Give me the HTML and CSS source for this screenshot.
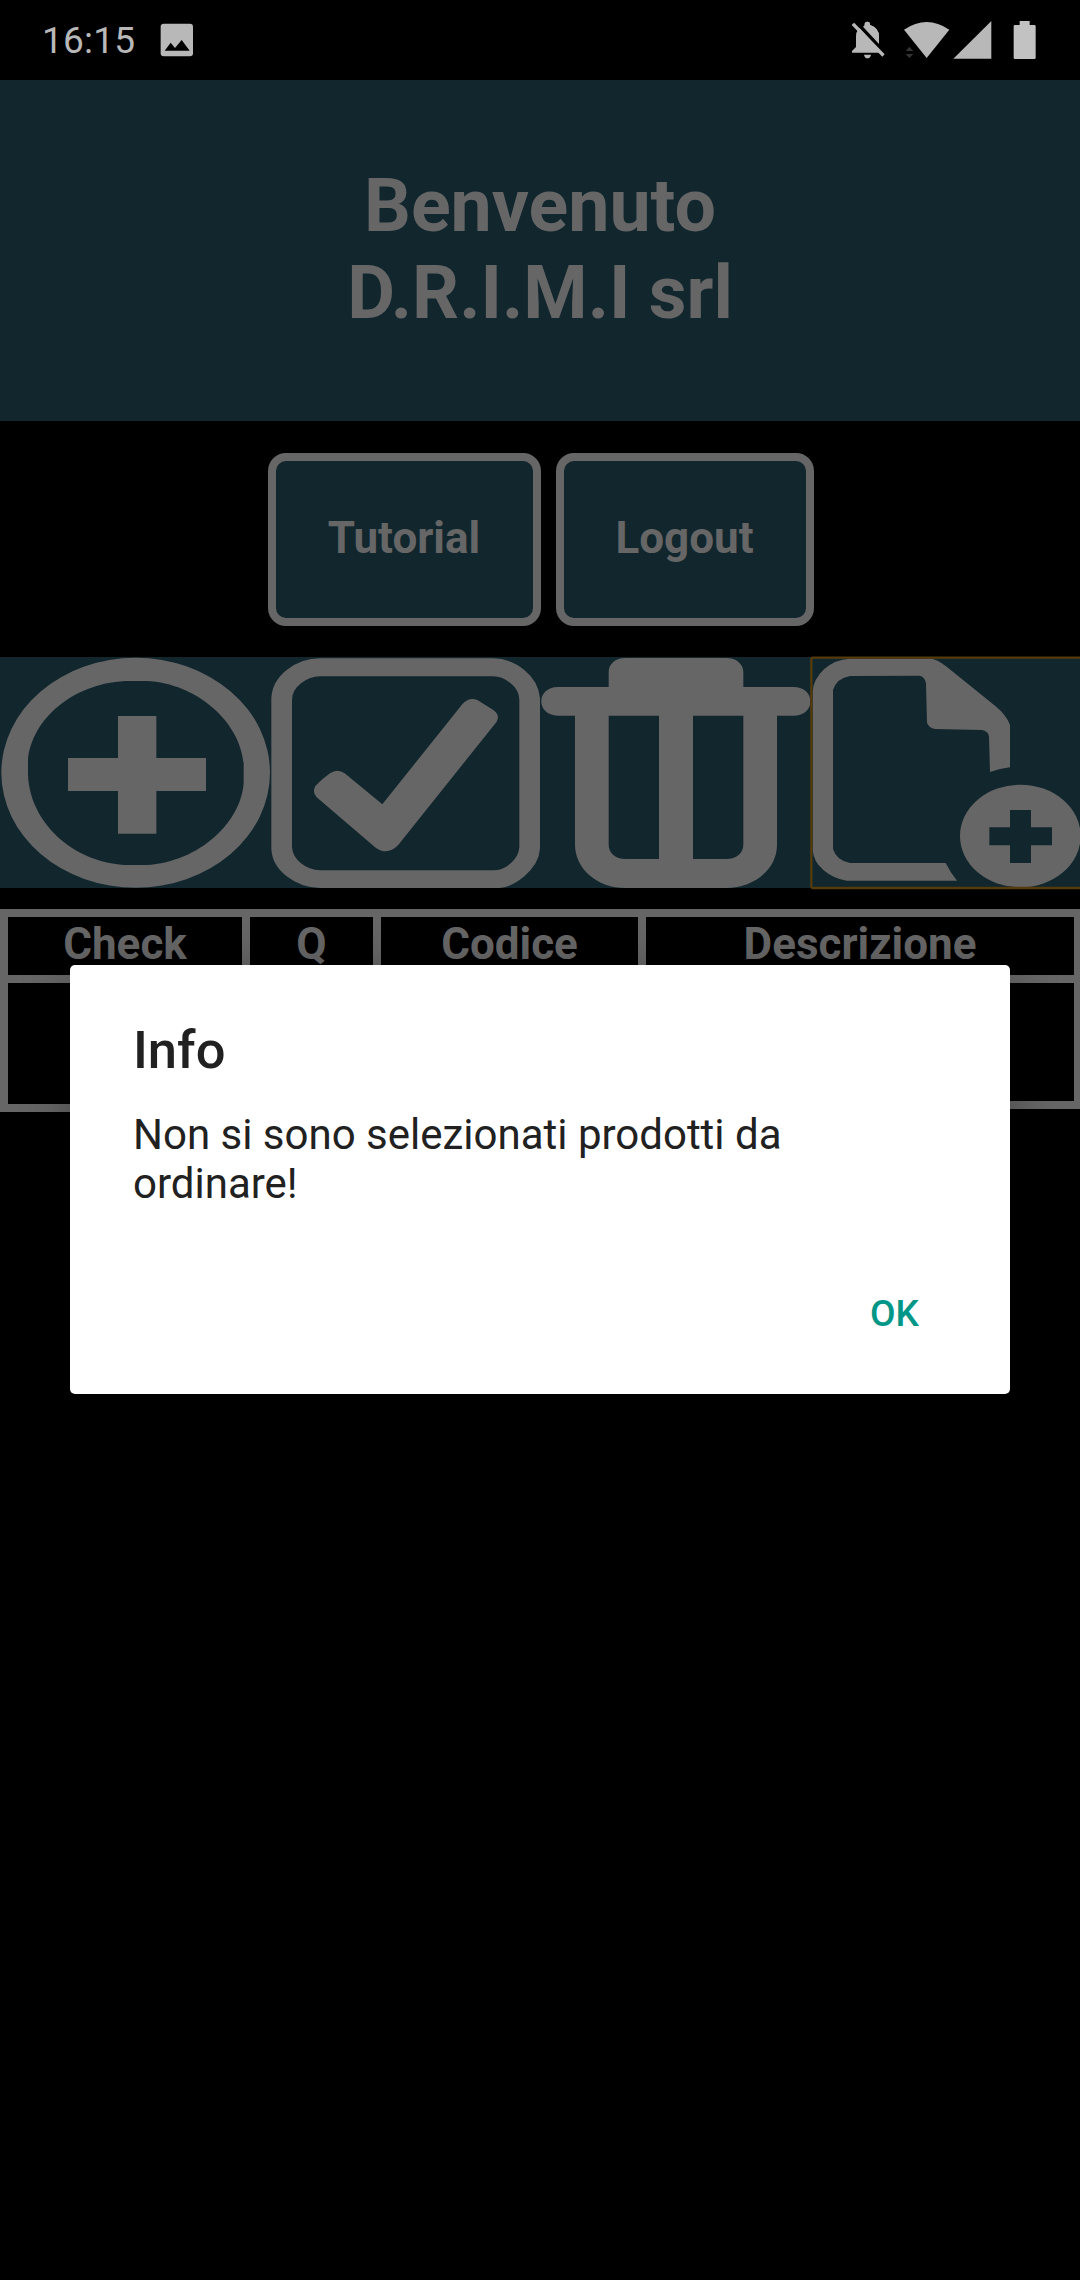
FILE: index.html
```html
<!DOCTYPE html>
<html lang="it">
<head>
<meta charset="utf-8">
<title>D.R.I.M.I srl</title>
<link rel="stylesheet" href="styles.css">
</head>
<body>
<div class="screen">
  <div class="status">
    <span class="time">16:15</span>
    <svg class="photo" viewBox="480 69 102 102"><rect x="482" y="71" width="97" height="98" rx="9"/><path class="cut" d="M494 152L512 128L525 144L545 120L569 152Z"/></svg>
    <div class="indicators">
      <svg class="bell" viewBox="90 60 105 120">
        <path d="M96 158V153L108 141V110Q108 83 134 75V73Q134 65 142 65Q150 65 150 73V75Q177 83 177 110V141L189 158Z"/>
        <path class="cut" d="M98 61L119 61L195 142V178L185 158Z"/>
        <path d="M129 80L134 76V73Q134 65 142 65Q150 65 150 73V75Q177 84 177 110V132Z"/>
        <path class="slash" d="M102 75L187 163"/>
        <path d="M132 164H153Q151 175 142 175Q134 175 132 164Z"/>
      </svg>
      <svg class="wifi" viewBox="252 60 138 120"><path d="M252 89Q320 43 388 89L320 174Z"/><path class="traffic" d="M257 153L268 140L280 153ZM257 162L268 174L280 162Z"/></svg>
      <svg class="signal" viewBox="400 60 117 120"><path d="M401 176L515 63V176Z"/></svg>
      <svg class="battery" viewBox="580 60 69 120"><path d="M600 63H630V75H644Q648 75 648 79V173Q648 177 644 177H586Q582 177 582 173V79Q582 75 586 75H600Z"/></svg>
    </div>
  </div>
  <header class="welcome"><h1>Benvenuto<br>D.R.I.M.I srl</h1></header>
  <nav class="actions">
    <button class="action tutorial">Tutorial</button>
    <button class="action logout">Logout</button>
  </nav>
  <div class="tools">
    <svg viewBox="0 51 810 693" preserveAspectRatio="none">
      <path fill-rule="evenodd" d="M4 398A403 344.500 0 0 1 810 398A403 345 0 0 1 4 398ZM84 390V406C90 545 215 665 372 675H440C600 665 724 545 731 428V370C720 245 590 130 440 123H375C215 132 95 240 84 360Z"/>
      <path d="M354 228H469V354H618V453H469V581H354V453H204V354H354Z"/>
    </svg>
    <svg viewBox="30 51 810 693" preserveAspectRatio="none">
      <path fill-rule="evenodd" d="M180 55H700Q750 55 793 90T840 175V625Q838 670 793 709T700 744H180Q125 744 80 709T34 625V175Q36 125 80 90T180 55ZM180 109Q150 109 123 130T96 180V622Q98 650 123 670T180 691H700Q728 691 752 670T778 622V180Q778 151 752 130T700 109Z"/>
      <path d="M166 438Q187 416 210 400Q232 385 254 400L367 493L608 191Q628 170 652 180L700 210Q721 225 710 245L414 616Q382 648 347 623L170 472Q156 459 166 438Z"/>
    </svg>
    <svg viewBox="30 51 810 693" preserveAspectRatio="none">
      <path fill-rule="evenodd" d="M236 141V97C236 72 256 54 286 54H589C619 54 640 72 640 97V141H791C858 141 858 227 791 227H741V614C741 687 673 744 589 744H286C203 744 135 687 135 614V227H84C17 227 17 141 84 141ZM236 227V614C236 639 257 657 286 657H387V227ZM489 227V657H589C619 657 640 639 640 614V227Z"/>
    </svg>
    <svg class="focused" viewBox="30 51 810 693" preserveAspectRatio="none">
      <path fill-rule="evenodd" d="M150 56H390Q410 56 440 80L586 198Q620 226 630 255V382Q600 385 570 396L567 290Q565 273 545 270L405 267Q387 264 381 248L378 130Q375 110 358 107L150 108Q111 114 99 150V627Q110 662 150 669H437Q450 696 471 722H140Q100 716 70 690T38 630V155Q40 118 72 88T150 56Z"/>
      <path fill-rule="evenodd" d="M480 588A181 154 0 0 1 842 588A181 154 0 0 1 480 588ZM630 510V562H568V616H630V669H693V616H756V562H693V510Z"/>
      <rect class="focus-ring" x="34" y="53" width="816" height="691" rx="5"/>
    </svg>
  </div>
  <div class="table">
    <div class="column check"><div class="head">Check</div></div>
    <div class="column quantity"><div class="head">Q</div></div>
    <div class="column code"><div class="head">Codice</div></div>
    <div class="column description"><div class="head">Descrizione</div></div>
  </div>
  <section class="dialog" role="dialog">
    <h2>Info</h2>
    <p>Non si sono selezionati prodotti da ordinare!</p>
    <button class="ok">OK</button>
  </section>
</div>
</body>
</html>
```
FILE: styles.css
```css
* { box-sizing: border-box; }

body {
  margin: 0;
  background: #000;
  font-family: Roboto, "Liberation Sans", sans-serif;
}

button {
  margin: 0;
  padding: 0;
  font-family: inherit;
}

svg { display: block; }

.screen {
  position: relative;
  width: 1080px;
  height: 2280px;
  overflow: hidden;
  background: #000;
}

.status {
  display: flex;
  align-items: center;
  height: 80px;
  padding: 0 44px 0 42px;
  color: #b8b8b8;
  fill: #b8b8b8;
}

.time {
  width: 118px;
  font-size: 37px;
  letter-spacing: .2px;
  line-height: 80px;
  padding-top: 2px;
}

.photo { width: 34px; height: 34px; }
.cut { fill: #000; }

.indicators {
  display: flex;
  margin-left: auto;
}

.bell { width: 35px; height: 40px; margin-right: 19px; }
.slash { stroke: #b8b8b8; stroke-width: 10; stroke-linecap: square; }
.wifi { width: 46px; height: 40px; margin-right: 3.300px; }
.traffic { fill: #333; }
.signal { width: 39px; height: 40px; margin-right: 21px; }
.battery { width: 23px; height: 40px; fill: #c2c2c2; }

.welcome {
  height: 341px;
  padding-top: 83px;
  background: #12262e;
  color: #666;
  text-align: center;
}

.welcome h1 {
  margin: 0;
  font-size: 73.500px;
  line-height: 87px;
  font-weight: 700;
}

.actions {
  display: flex;
  justify-content: center;
  gap: 15px;
  height: 236px;
  padding: 32px 0 0 1px;
}

.action {
  height: 173px;
  padding-bottom: 4px;
  border: 8px solid #666;
  border-radius: 18px;
  background: #12262e;
  color: #666;
  font-size: 44px;
  font-weight: 700;
}

.tutorial { width: 273px; }
.logout { width: 258px; }

.tools {
  display: grid;
  grid-template-columns: repeat(4, 270px);
  height: 231px;
  background: #12262e;
  fill: #666;
}

.tools svg { width: 270px; height: 231px; }
.tools .focused { overflow: visible; }
.focus-ring { fill: none; stroke: #553b0b; stroke-width: 7; }

.table {
  display: flex;
  align-items: flex-start;
  margin-top: 21px;
}

.column {
  height: 200px;
  border: 8px solid #666;
  border-left-width: 0;
}

.check { width: 250px; height: 203px; border-left-width: 8px; }
.quantity { width: 131px; }
.code { width: 265px; }
.description { width: 434px; border-right-width: 6px; }

.head {
  height: 66px;
  border-bottom: 8px solid #666;
  color: #666;
  font-size: 44px;
  line-height: 54px;
  font-weight: 700;
  text-align: center;
}

.dialog {
  position: absolute;
  left: 70px;
  top: 965px;
  width: 940px;
  height: 428.500px;
  display: flex;
  flex-direction: column;
  padding: 54px 63px 46px;
  border-radius: 5px;
  background: #fff;
  box-shadow: 0 10px 50px rgba(0, 0, 0, .3);
  color: #212121;
}

.dialog h2 {
  margin: 0 0 29px;
  font-size: 52.500px;
  line-height: 62px;
  font-weight: 500;
}

.dialog p {
  margin: 0;
  width: 700px;
  font-size: 42px;
  line-height: 49px;
}

.ok {
  align-self: flex-end;
  width: 105px;
  height: 68px;
  margin-top: auto;
  border: 0;
  background: none;
  color: #009688;
  font-size: 37px;
  font-weight: 500;
}
```
